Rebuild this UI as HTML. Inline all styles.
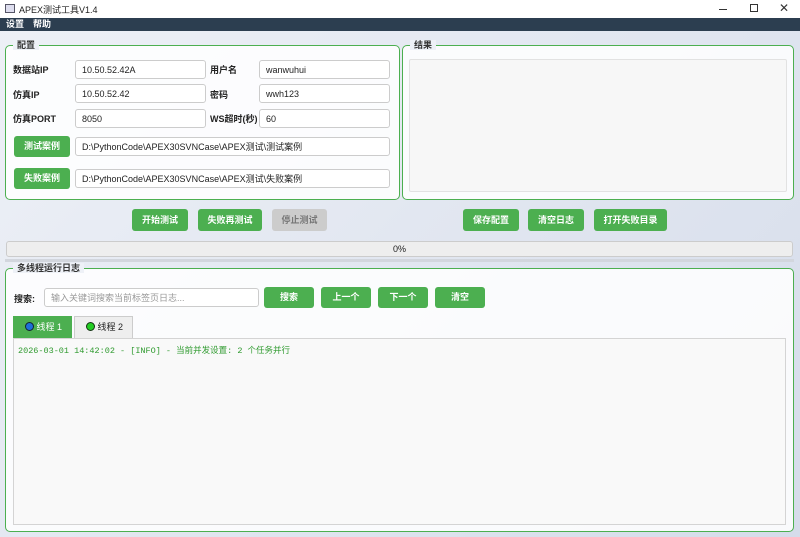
<!DOCTYPE html>
<html><head><meta charset="utf-8"><style>
*{box-sizing:border-box;margin:0;padding:0}
body{width:800px;height:537px;overflow:hidden;position:relative;font-family:"Liberation Sans","Noto Sans CJK SC",sans-serif;font-size:9px;color:#222;background:linear-gradient(135deg,#eef1f7,#d5dcea)}
.a{position:absolute}
.title{left:0;top:0;width:800px;height:18px;background:#fff}
.menu{left:0;top:18px;width:800px;height:13px;background:#2c3e50;color:#fff;font-size:9px;font-weight:bold;line-height:13px}
.grp{border:1.5px solid #4caf50;border-radius:5px;background:rgba(255,255,255,0.85)}
.gt{font-size:9px;font-weight:bold;color:#333;background:#eef1f7;padding:0 4px;line-height:10px}
.inp{background:#fff;border:1px solid #ccc;border-radius:3px;padding-left:6px;font-size:9px;line-height:18px;height:19px}
.lbl{font-weight:bold;font-size:9px}
.btn{background:#4caf50;color:#fff;font-weight:bold;border-radius:3px;text-align:center;font-size:9px}
</style></head><body>
<div class="a title"><div class="a" style="left:5px;top:4px;width:10px;height:9px;border:1px solid #556;background:#dde"></div><div class="a" style="left:19px;top:3px;font-size:9px">APEX测试工具V1.4</div>
<div class="a" style="left:719px;top:9px;width:8px;height:1px;background:#333"></div>
<div class="a" style="left:750px;top:4px;width:8px;height:8px;border:1px solid #333"></div>
<div class="a" style="left:779px;top:1px;font-size:12px;color:#333">✕</div></div>
<div class="a menu"><span style="margin-left:6px">设置</span><span style="margin-left:9px">帮助</span></div>

<div class="a grp" style="left:5px;top:45px;width:395px;height:155px"></div>
<div class="a gt" style="left:13px;top:40px">配置</div>
<div class="a lbl" style="left:13px;top:63px">数据站IP</div>
<div class="a inp" style="left:75px;top:60px;width:131px">10.50.52.42A</div>
<div class="a lbl" style="left:210px;top:63px">用户名</div>
<div class="a inp" style="left:259px;top:60px;width:131px">wanwuhui</div>
<div class="a lbl" style="left:13px;top:88px">仿真IP</div>
<div class="a inp" style="left:75px;top:84px;width:131px">10.50.52.42</div>
<div class="a lbl" style="left:210px;top:88px">密码</div>
<div class="a inp" style="left:259px;top:84px;width:131px">wwh123</div>
<div class="a lbl" style="left:13px;top:112px">仿真PORT</div>
<div class="a inp" style="left:75px;top:109px;width:131px">8050</div>
<div class="a lbl" style="left:210px;top:112px">WS超时(秒)</div>
<div class="a inp" style="left:259px;top:109px;width:131px">60</div>
<div class="a btn" style="left:14px;top:136px;width:56px;height:21px;line-height:21px">测试案例</div>
<div class="a inp" style="left:75px;top:137px;width:315px">D:\PythonCode\APEX30SVNCase\APEX测试\测试案例</div>
<div class="a btn" style="left:14px;top:168px;width:56px;height:21px;line-height:21px">失败案例</div>
<div class="a inp" style="left:75px;top:169px;width:315px">D:\PythonCode\APEX30SVNCase\APEX测试\失败案例</div>

<div class="a grp" style="left:402px;top:45px;width:392px;height:155px"></div>
<div class="a gt" style="left:410px;top:40px">结果</div>
<div class="a" style="left:409px;top:59px;width:378px;height:133px;background:#f7f7f7;border:1px solid #e2e2e2;border-radius:2px"></div>

<div class="a btn" style="left:132px;top:209px;width:56px;height:22px;line-height:22px">开始测试</div>
<div class="a btn" style="left:198px;top:209px;width:64px;height:22px;line-height:22px">失败再测试</div>
<div class="a btn" style="left:272px;top:209px;width:55px;height:22px;line-height:22px;background:#ccc;color:#777">停止测试</div>
<div class="a btn" style="left:463px;top:209px;width:56px;height:22px;line-height:22px">保存配置</div>
<div class="a btn" style="left:528px;top:209px;width:56px;height:22px;line-height:22px">清空日志</div>
<div class="a btn" style="left:594px;top:209px;width:73px;height:22px;line-height:22px">打开失败目录</div>

<div class="a" style="left:6px;top:241px;width:787px;height:16px;background:#eee;border:1px solid #ccc;border-radius:3px;text-align:center;line-height:14px;font-size:9px">0%</div>
<div class="a" style="left:5px;top:259px;width:789px;height:3px;background:#d2d6dd"></div>

<div class="a grp" style="left:5px;top:268px;width:789px;height:264px"></div>
<div class="a gt" style="left:13px;top:263px">多线程运行日志</div>
<div class="a lbl" style="left:14px;top:292px">搜索:</div>
<div class="a inp" style="left:44px;top:288px;width:215px;color:#999">输入关键词搜索当前标签页日志...</div>
<div class="a btn" style="left:264px;top:287px;width:50px;height:21px;line-height:21px">搜索</div>
<div class="a btn" style="left:321px;top:287px;width:50px;height:21px;line-height:21px">上一个</div>
<div class="a btn" style="left:378px;top:287px;width:50px;height:21px;line-height:21px">下一个</div>
<div class="a btn" style="left:435px;top:287px;width:50px;height:21px;line-height:21px">清空</div>
<div class="a" style="left:13px;top:316px;width:59px;height:23px;background:#4caf50;color:#fff;line-height:22px;padding-left:12px"><span style="display:inline-block;width:9px;height:9px;border-radius:50%;background:#1e6fd9;border:1px solid #123;vertical-align:-1px"></span> 线程 1</div>
<div class="a" style="left:74px;top:316px;width:59px;height:23px;background:#eee;border:1px solid #ccc;line-height:21px;padding-left:11px"><span style="display:inline-block;width:9px;height:9px;border-radius:50%;background:#2c2;border:1px solid #131;vertical-align:-1px"></span> 线程 2</div>
<div class="a" style="left:13px;top:338px;width:773px;height:187px;background:#f9f9f9;border:1px solid #d4d4d4"></div>
<div class="a" style="left:18px;top:344px;font-family:'Liberation Mono','Noto Sans CJK SC',monospace;font-size:8.5px;color:#2e9a2e">2026-03-01 14:42:02 - [INFO] - 当前并发设置: 2 个任务并行</div>
</body></html>
